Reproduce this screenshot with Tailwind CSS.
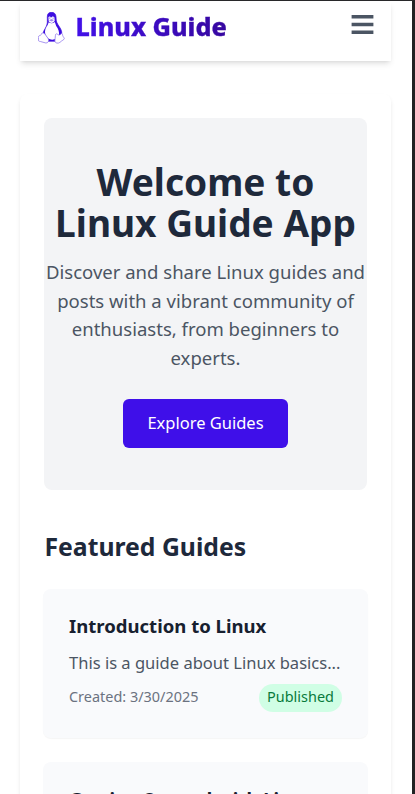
<!DOCTYPE html>
<html lang="en">
<head>
<meta charset="utf-8">
<title>Linux Guide</title>
<script src="https://cdn.jsdelivr.net/npm/@tailwindcss/browser@4"></script>
</head>
<body class="h-[794px] overflow-hidden border-t border-r-3 border-t-[#28282a] border-r-[#222223] bg-white font-['Noto_Sans',sans-serif] text-[#1e293b]">
<header class="ml-5 mr-[21px] flex h-[60px] items-start justify-between bg-white pl-[18px] pr-[17px] shadow-md">
  <div class="flex">
    <svg class="mt-[11px] h-8 w-7 shrink-0" viewBox="0 0 28 32" fill="none" stroke="#3c0de0" stroke-width=".7" stroke-linejoin="round">
      <path d="M9.300 5C9.200 1.800 10.800.3 13.500.3s4.300 1.600 4.500 4.500c.2 3.300.1 4.900 2 7.900 2.200 3.300 4.300 6 3.700 9.800l-3.500 5L18 29.200H10l-4-4.700-1-2.500c.3-4 3.800-6.500 4.300-11C9.400 8.500 9.300 7 9.300 5Z" fill="#3c0de0"/>
      <path d="M10.700 10.200c1.900 1.500 4.100 1.400 6.100-.1l1.400 4c2.200 2.900 3.600 6.200 2.500 10-2.500 4.300-8.500 4.900-12 .8-2.500-3.300-2.100-6.700-.2-10.100 1.100-1.500 1.500-2.800 2.200-4.600Z" fill="#fff" stroke="none"/>
      <path d="M10.500 6.600c-.7-2.400 2-2.700 2.500-.6.800-2.500 4-1.800 3.500.8l.2 2.200c-1.900 2.400-4.200 2.500-6 .4Z" fill="#fff" stroke="none"/>
      <path d="m11 8.200 2.400-1.100 2.700 1-2.400 1.400Z" fill="#a18aee" stroke="none"/>
      <path d="M11.800 5.600v1M15.100 5.600v1"/>
      <path d="M3.800 21.300c1.300-.8 2.500-.2 3.700 1.500l2.800 4c1 2-.3 4.400-2.400 4.200l-5.500-1.500c-1.900-.3-2.400-.8-1.800-2.300-.6-2.700-.2-3.500 1.700-3.700.9-.4.800-1.400 1.500-2.200Z" fill="#fff" stroke="#8468ea"/>
      <path d="M17.400 23.600c-.1-1.800 1.200-2.200 2.100-1.300 1.300 1.400 2.700.5 3.900-.9 1 .1 1 1.100 1.200 1.900.6 1.800 1.500 2.200 1.700 3.300-.2 1.300-2.300 1.700-4.400 3.800-1.900 1.400-4.600.8-5-1.100-.3-2 .7-3.800.5-5.700Z" fill="#fff" stroke="#8468ea"/>
    </svg>
    <div class="ml-[9.500px] mt-[7px] bg-linear-to-r from-[#4210e8] to-[#36079f] bg-clip-text text-[25.200px] leading-9 font-extrabold whitespace-nowrap text-transparent [-webkit-text-stroke:0.35px_transparent]">Linux Guide</div>
  </div>
  <svg class="mt-[14px] h-5 w-[23px]" viewBox="0 0 23 20" fill="none" stroke="#4b5563" stroke-width="3.400"><path d="M.6 1.800h21.800M.6 9.500h21.800M.6 17.200h21.800"/></svg>
</header>
<main class="ml-5 mr-[21px] mt-[33px] h-[850px] rounded-lg bg-white px-6 pt-6 shadow-[0_3px_4px_rgb(0_0_0/0.09)]">
  <section class="flex h-[372px] flex-col items-center rounded-lg bg-[#f3f4f6] pt-[43px] text-center">
    <h1 class="text-[37.100px] leading-[41px] font-bold whitespace-nowrap">Welcome to<br>Linux Guide App</h1>
    <p class="mt-[15px] text-[18.550px] leading-[28.700px] whitespace-nowrap text-[#4b5563]">Discover and share Linux guides and<br>posts with a vibrant community of<br>enthusiasts, from beginners to<br>experts.</p>
    <button class="mt-[26px] h-[49px] w-[165px] rounded-md bg-[#3f0fe9] text-[16.500px] whitespace-nowrap text-white">Explore Guides</button>
  </section>
  <h2 class="ml-[0.500px] mt-[39px] text-[24.750px] leading-9 font-bold">Featured Guides</h2>
  <div class="-mx-px mt-6 flex flex-col gap-6">
    <article class="h-[149px] rounded-lg bg-[#f9fafc] px-[26px] pt-[22px] shadow-[0_1px_1px_rgb(0_0_0/0.04)]">
      <h3 class="text-[18.550px] leading-[29px] font-bold whitespace-nowrap text-[#17202f]">Introduction to Linux</h3>
      <p class="mt-[10px] text-[16.550px] leading-[25px] whitespace-nowrap text-[#4b5563]">This is a guide about Linux basics...</p>
      <div class="mt-[9px] flex justify-between text-[14.450px] whitespace-nowrap">
        <span class="leading-[26px] text-[#6b7280]">Created: 3/30/2025</span>
        <span class="h-7 w-[83px] rounded-full bg-[#d0fee5] text-center leading-[26px] text-[#087a3c]">Published</span>
      </div>
    </article>
    <article class="h-[149px] rounded-lg bg-[#f9fafc] px-[26px] pt-[22px]">
      <h3 class="text-[18.550px] leading-[29px] font-bold whitespace-nowrap text-[#17202f]">Getting Started with Linux</h3>
    </article>
  </div>
</main>
</body>
</html>
